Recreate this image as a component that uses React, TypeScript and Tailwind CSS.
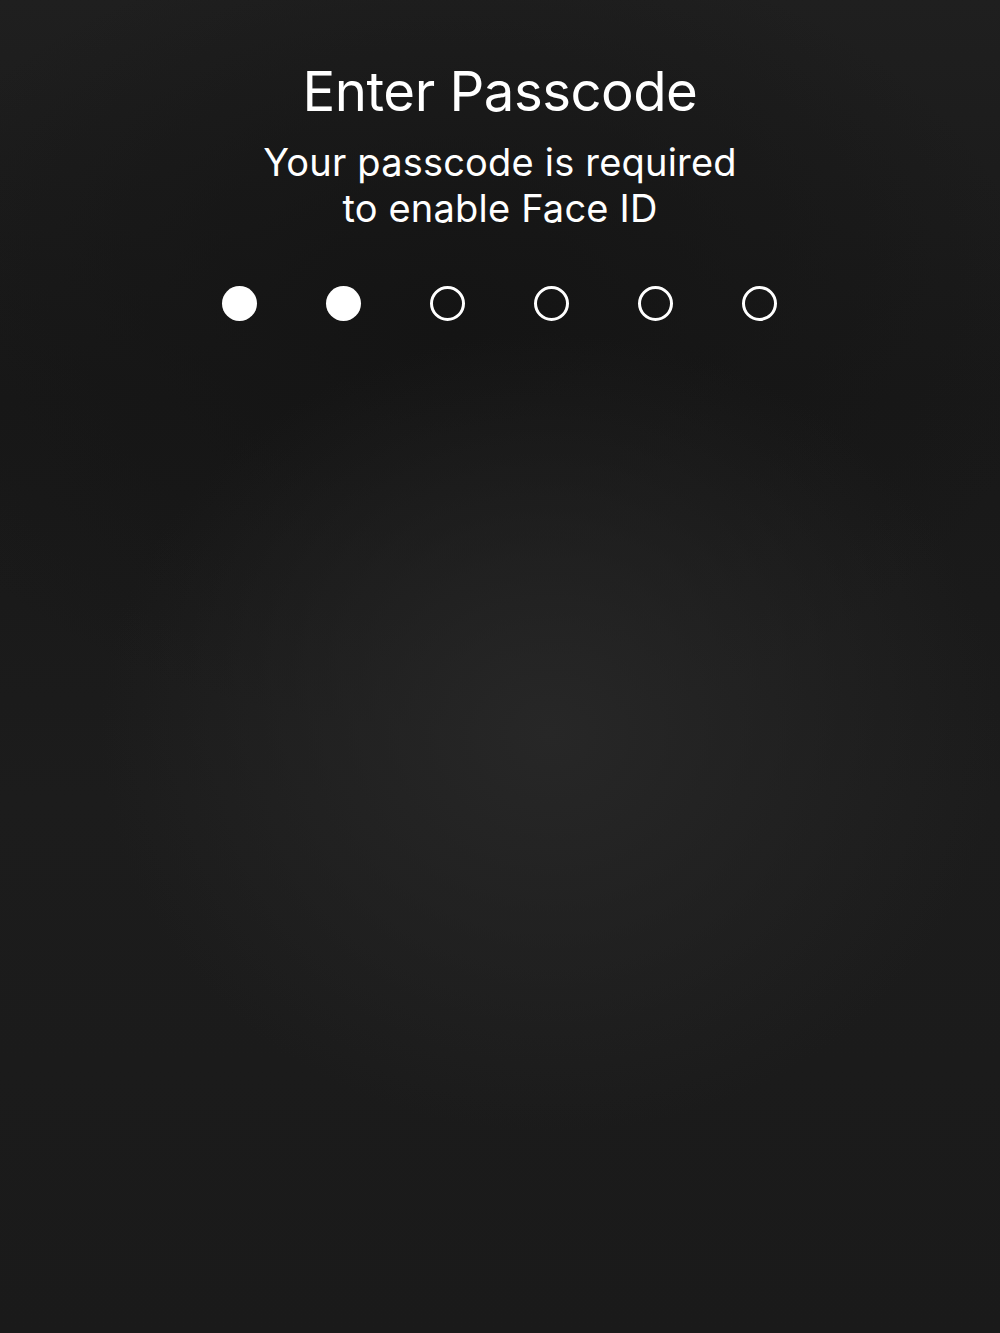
export default function App() {
  const filled = [true, true, false, false, false, false];
  return (
    <div
      className="w-[1000px] h-[1333px] overflow-hidden flex flex-col items-center bg-[#1b1b1b] bg-[radial-gradient(ellipse_45%_30%_at_55%_55%,#272727_0%,rgba(39,39,39,0)_100%),radial-gradient(ellipse_60%_30%_at_45%_25%,#141414_0%,rgba(20,20,20,0)_100%),linear-gradient(180deg,#1f1f1f_0%,#181818_30%,#1c1c1c_60%,#1a1a1a_100%)]"
      style={{ fontFamily: "Inter, 'Open Sans', sans-serif" }}
    >
      <h1 className="mt-[55px] text-white text-[54.5px] leading-[72px] tracking-[-0.5px] font-normal">
        Enter Passcode
      </h1>
      <p className="mt-[12px] text-white text-[38px] leading-[46px] tracking-[0.2px] text-center font-normal">
        Your passcode is required
        <br />
        to enable Face ID
      </p>
      <div className="mt-[55px] ml-[-2px] flex gap-[69px]">
        {filled.map((f, i) => (
          <div
            key={i}
            className={
              f
                ? "w-[35px] h-[35px] rounded-full bg-white"
                : "w-[35px] h-[35px] rounded-full border-[3px] border-white"
            }
          />
        ))}
      </div>
    </div>
  );
}
